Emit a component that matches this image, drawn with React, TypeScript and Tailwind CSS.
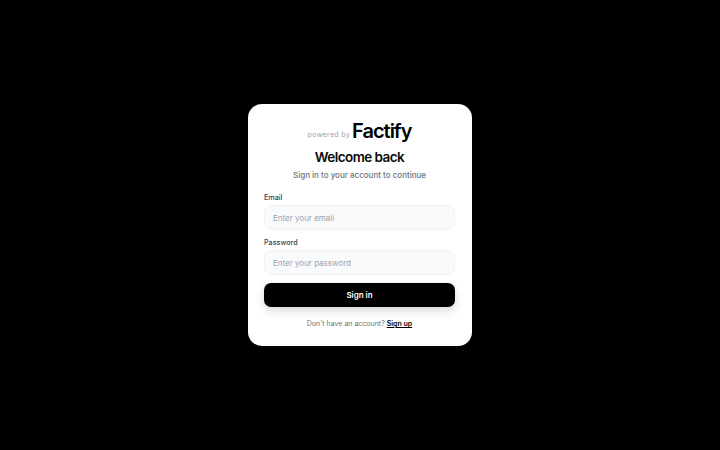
export default function App() {
  return (
    <div className="flex h-[450px] w-[720px] items-center justify-center bg-black font-['Inter',sans-serif] antialiased">
      <div className="w-[224px] rounded-[14px] bg-white pt-4 pr-[17px] pb-4 pl-4">
        <div className="flex h-[22px] items-end justify-center gap-[2px]">
          <span className="pb-[2px] text-[7px] leading-[10px] tracking-[0.35px] text-[#9ca3af]">powered by</span>
          <span className="text-[20px] leading-[22px] font-semibold tracking-[-1px] text-black">Factify</span>
        </div>
        <h1 className="mt-[5px] text-center text-[13.5px] leading-[20px] font-semibold tracking-[-0.55px] text-[#0a0a0a]">Welcome back</h1>
        <p className="mt-[1px] text-center text-[8px] leading-[14px] font-medium text-[#6b7280]">Sign in to your account to continue</p>
        <form className="mt-[10px] flex flex-col gap-[7px]">
          <div>
            <label className="mb-[1px] block text-[7.2px] leading-[12px] font-medium text-[#374151]">Email</label>
            <input
              type="email"
              placeholder="Enter your email"
              className="block h-[25px] w-full rounded-[7px] border border-[#f0f2f5] bg-[#f9fafb] px-2 text-[8px] text-[#111827] outline-none placeholder:text-[#9ca3af]"
            />
          </div>
          <div>
            <label className="mb-[1px] block text-[7.2px] leading-[12px] font-medium text-[#374151]">Password</label>
            <input
              type="password"
              placeholder="Enter your password"
              className="block h-[25px] w-full rounded-[7px] border border-[#f0f2f5] bg-[#f9fafb] px-2 text-[8px] text-[#111827] outline-none placeholder:text-[#9ca3af]"
            />
          </div>
          <button
            type="button"
            className="mt-px block h-6 w-full rounded-[7px] bg-black text-[8px] font-semibold text-white shadow-[0_4px_8px_rgba(0,0,0,0.15)]"
          >
            Sign in
          </button>
        </form>
        <p className="mt-[11px] text-center text-[7px] leading-[12px] text-[#6b7280]">
          Don't have an account?{" "}
          <a className="font-semibold text-black underline">Sign up</a>
        </p>
      </div>
    </div>
  );
}
